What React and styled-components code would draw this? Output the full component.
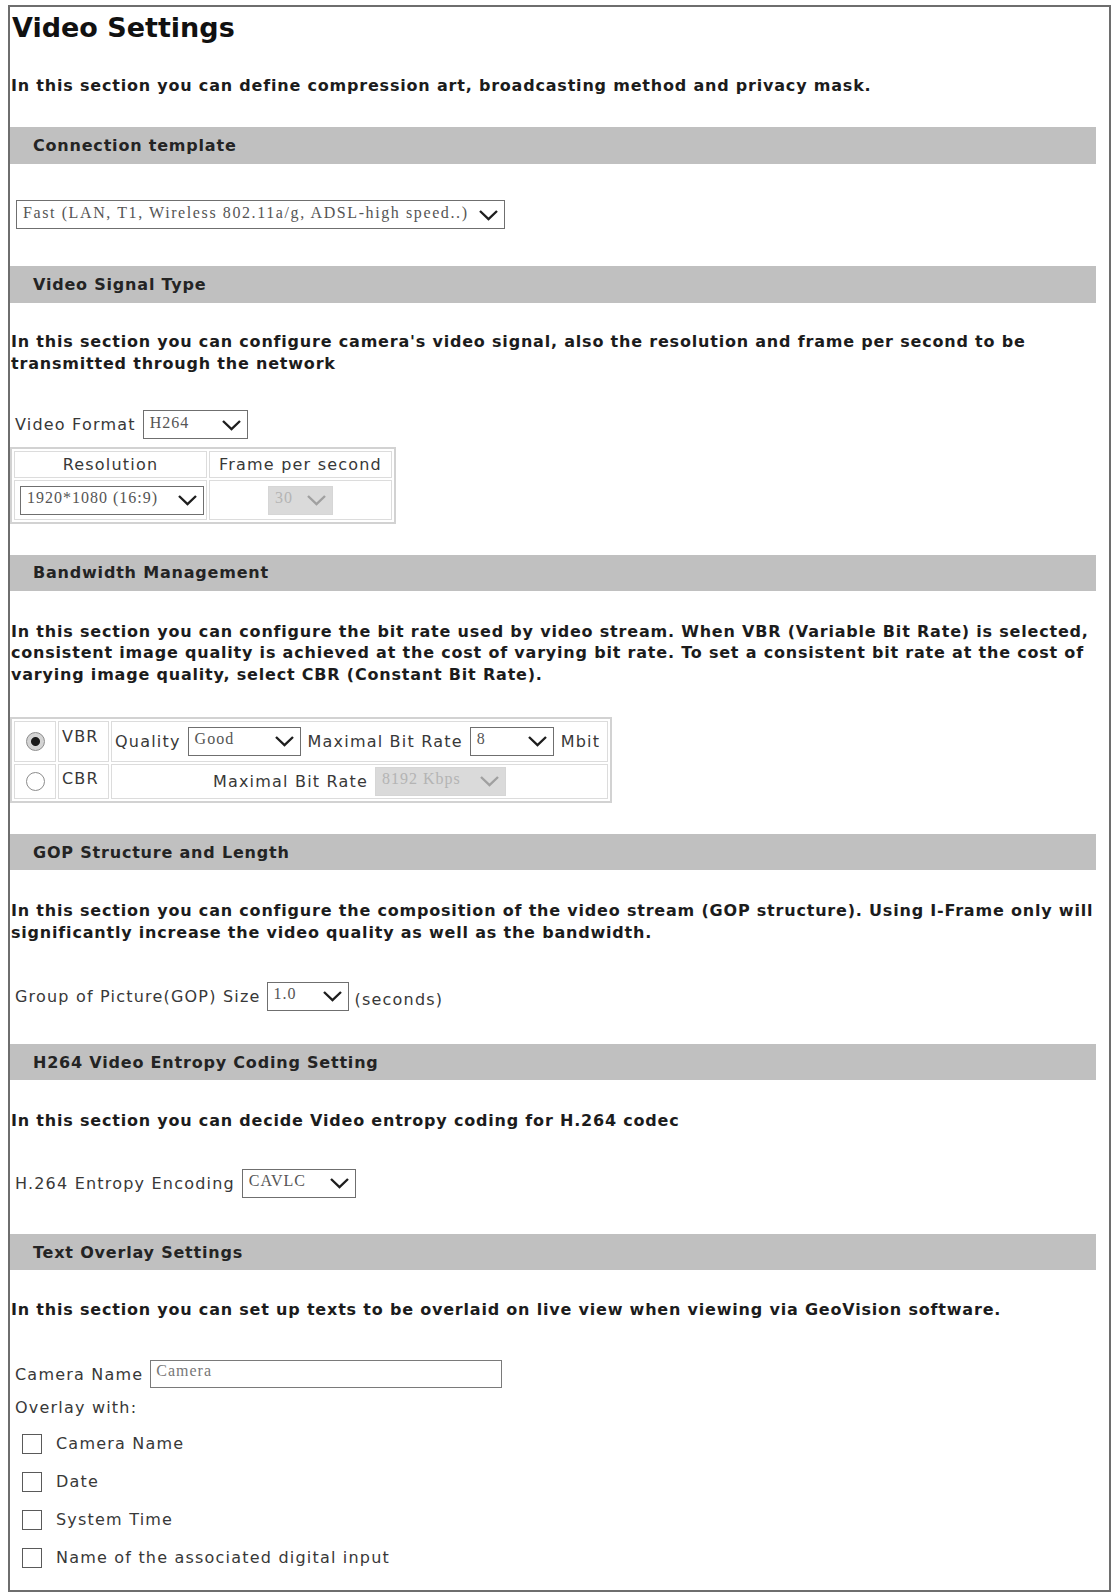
import React from "react";
import styled, { createGlobalStyle } from "styled-components";

const GlobalStyle = createGlobalStyle`
  body {
    margin: 0;
    background: #fff;
  }
`;

const Frame = styled.div`
  box-sizing: border-box;
  width: 1103px;
  margin: 5px 0 0 8px;
  border: 2px solid #6e6e6e;
  padding: 0 13px 13px 0;
  font-family: "DejaVu Sans", "Liberation Sans", sans-serif;
  color: #222;
`;

const Title = styled.h1`
  margin: 4px 0 0 2px;
  font-size: 27px;
  line-height: 34px;
  font-weight: bold;
  color: #111;
`;

const Desc = styled.p`
  margin: ${(p) => p.$mt}px 0 0 1px;
  font-size: 16px;
  line-height: 21.5px;
  font-weight: bold;
  letter-spacing: 0.8px;
  color: #1c1c1c;
  white-space: nowrap;
`;

const Bar = styled.div`
  display: flex;
  align-items: center;
  height: 36.5px;
  margin-top: ${(p) => p.$mt}px;
  padding-left: 23px;
  background: #c0c0c0;
  font-size: 16px;
  font-weight: bold;
  letter-spacing: 0.8px;
  color: #242424;
`;

const Row = styled.div`
  display: flex;
  align-items: center;
  gap: ${(p) => p.$gap ?? 7}px;
  height: 29px;
  margin-top: ${(p) => p.$mt}px;
  padding-left: ${(p) => p.$pl ?? 5}px;
`;

const Label = styled.span`
  font-size: 16px;
  letter-spacing: 1.2px;
  color: #383838;
  white-space: nowrap;
`;

const Note = styled(Label)`
  padding-top: 6px;
`;

const Select = styled.div`
  box-sizing: border-box;
  display: inline-flex;
  align-items: center;
  justify-content: space-between;
  flex: none;
  width: ${(p) => p.$w}px;
  height: 29px;
  padding: 0 5px 0 6px;
  border: 1px solid ${(p) => (p.$off ? "#d6d6d6" : "#6f6f6f")};
  background: ${(p) => (p.$off ? "#dadada" : "#fff")};
  font-family: "Liberation Serif", "Times New Roman", serif;
  font-size: 16px;
  letter-spacing: ${(p) => p.$ls ?? 1}px;
  color: ${(p) => (p.$off ? "#b4b4b4" : "#555")};
  white-space: nowrap;
  vertical-align: middle;
`;

const Value = styled.span`
  padding-bottom: 4px;
`;

const Chevron = ({ off }) => (
  <svg width="21" height="12" viewBox="0 0 21 12">
    <polyline
      points="2,2 10.5,10 19,2"
      fill="none"
      stroke={off ? "#a0a0a0" : "#1e1e1e"}
      strokeWidth="2.4"
    />
  </svg>
);

const Dropdown = ({ w, off, ls, children }) => (
  <Select $w={w} $off={off} $ls={ls}>
    <Value>{children}</Value>
    <Chevron off={off} />
  </Select>
);

const TextInput = styled.input`
  box-sizing: border-box;
  width: 352px;
  height: 28px;
  padding: 0 0 6px 5px;
  border: 1px solid #7a7a7a;
  font-family: "Liberation Serif", "Times New Roman", serif;
  font-size: 16px;
  letter-spacing: 1px;
  color: #777;
  outline: none;
`;

const Grid = styled.table`
  box-sizing: border-box;
  width: ${(p) => p.$w}px;
  margin-top: ${(p) => p.$mt}px;
  border: 2px solid #d2d2d2;
  border-spacing: 2px;
  font-size: 16px;
  letter-spacing: 1.2px;
  color: #383838;
`;

const Cell = styled.td`
  box-sizing: border-box;
  width: ${(p) => (p.$w ? `${p.$w}px` : "auto")};
  height: ${(p) => p.$h}px;
  padding: ${(p) => p.$pad ?? "0 3px"};
  border: 1px solid #dcdcdc;
  text-align: ${(p) => p.$align ?? "left"};
  vertical-align: ${(p) => p.$valign ?? "middle"};
  white-space: nowrap;
`;

const CellLine = styled.div`
  display: flex;
  align-items: center;
  justify-content: ${(p) => p.$justify ?? "flex-start"};
  gap: 7px;
`;

const Radio = styled.span`
  display: inline-block;
  box-sizing: border-box;
  width: 19px;
  height: 19px;
  border-radius: 50%;
  border: 1px solid #8c8c8c;
  background: ${(p) =>
    p.$on
      ? "radial-gradient(circle, #1a1a1a 0 4px, #d4d4d4 5px 100%)"
      : "#fff"};
  vertical-align: middle;
`;

const Plain = styled(Label)`
  display: block;
  margin-top: ${(p) => p.$mt}px;
  padding-left: 5px;
  line-height: 20px;
`;

const Checks = styled.div`
  margin-top: 6.5px;
  padding-left: 12px;
`;

const CheckRow = styled.label`
  display: flex;
  align-items: center;
  gap: 14px;
  height: 38px;
`;

const Box = styled.span`
  box-sizing: border-box;
  width: 20px;
  height: 20px;
  border: 1.5px solid #5a5a5a;
  background: #fff;
`;

const overlays = [
  "Camera Name",
  "Date",
  "System Time",
  "Name of the associated digital input",
];

export default function App() {
  return (
    <>
      <GlobalStyle />
      <Frame>
        <Title>Video Settings</Title>
        <Desc $mt={29.5}>
          In this section you can define compression art, broadcasting method
          and privacy mask.
        </Desc>

        <Bar $mt={31}>Connection template</Bar>
        <Row $mt={36.5} $pl={6}>
          <Dropdown w={489} ls={1.6}>
            Fast (LAN, T1, Wireless 802.11a/g, ADSL-high speed..)
          </Dropdown>
        </Row>

        <Bar $mt={37}>Video Signal Type</Bar>
        <Desc $mt={28.75}>
          In this section you can configure camera's video signal, also the
          resolution and frame per second to be
          <br />
          transmitted through the network
        </Desc>
        <Row $mt={35.75}>
          <Label>Video Format</Label>
          <Dropdown w={105}>H264</Dropdown>
        </Row>
        <Grid $w={386} $mt={8}>
          <tbody>
            <tr>
              <Cell $w={192} $h={27} $align="center">
                Resolution
              </Cell>
              <Cell $h={27} $align="center">
                Frame per second
              </Cell>
            </tr>
            <tr>
              <Cell $h={40} $pad="0 2px 0 5px">
                <Dropdown w={184}>1920*1080 (16:9)</Dropdown>
              </Cell>
              <Cell $h={40} $align="center">
                <Dropdown w={65} off>
                  30
                </Dropdown>
              </Cell>
            </tr>
          </tbody>
        </Grid>

        <Bar $mt={30.5}>Bandwidth Management</Bar>
        <Desc $mt={29.85}>
          In this section you can configure the bit rate used by video stream.
          When VBR (Variable Bit Rate) is selected,
          <br />
          consistent image quality is achieved at the cost of varying bit rate.
          To set a consistent bit rate at the cost of
          <br />
          varying image quality, select CBR (Constant Bit Rate).
        </Desc>
        <Grid $w={602} $mt={31.65}>
          <tbody>
            <tr>
              <Cell $w={42} $h={41} $align="center">
                <Radio $on />
              </Cell>
              <Cell $w={51} $h={41} $valign="top" $pad="5px 3px 0">
                VBR
              </Cell>
              <Cell $h={41}>
                <CellLine>
                  <Label>Quality</Label>
                  <Dropdown w={113}>Good</Dropdown>
                  <Label>Maximal Bit Rate</Label>
                  <Dropdown w={84}>8</Dropdown>
                  <Label>Mbit</Label>
                </CellLine>
              </Cell>
            </tr>
            <tr>
              <Cell $h={35} $align="center">
                <Radio />
              </Cell>
              <Cell $h={35} $valign="top" $pad="4px 3px 0">
                CBR
              </Cell>
              <Cell $h={35}>
                <CellLine $justify="center">
                  <Label>Maximal Bit Rate</Label>
                  <Dropdown w={131} off>
                    8192 Kbps
                  </Dropdown>
                </CellLine>
              </Cell>
            </tr>
          </tbody>
        </Grid>

        <Bar $mt={31}>GOP Structure and Length</Bar>
        <Desc $mt={29.75}>
          In this section you can configure the composition of the video stream
          (GOP structure). Using I-Frame only will
          <br />
          significantly increase the video quality as well as the bandwidth.
        </Desc>
        <Row $mt={38.75} $gap={6}>
          <Label>Group of Picture(GOP) Size</Label>
          <Dropdown w={82}>1.0</Dropdown>
          <Note>(seconds)</Note>
        </Row>

        <Bar $mt={33}>H264 Video Entropy Coding Setting</Bar>
        <Desc $mt={29.75}>
          In this section you can decide Video entropy coding for H.264 codec
        </Desc>
        <Row $mt={37.25}>
          <Label>H.264 Entropy Encoding</Label>
          <Dropdown w={114}>CAVLC</Dropdown>
        </Row>

        <Bar $mt={36}>Text Overlay Settings</Bar>
        <Desc $mt={28.75}>
          In this section you can set up texts to be overlaid on live view when
          viewing via GeoVision software.
        </Desc>
        <Row $mt={39.25}>
          <Label>Camera Name</Label>
          <TextInput defaultValue="Camera" />
        </Row>
        <Plain $mt={9.5}>Overlay with:</Plain>
        <Checks>
          {overlays.map((name) => (
            <CheckRow key={name}>
              <Box />
              <Label>{name}</Label>
            </CheckRow>
          ))}
        </Checks>
      </Frame>
    </>
  );
}
